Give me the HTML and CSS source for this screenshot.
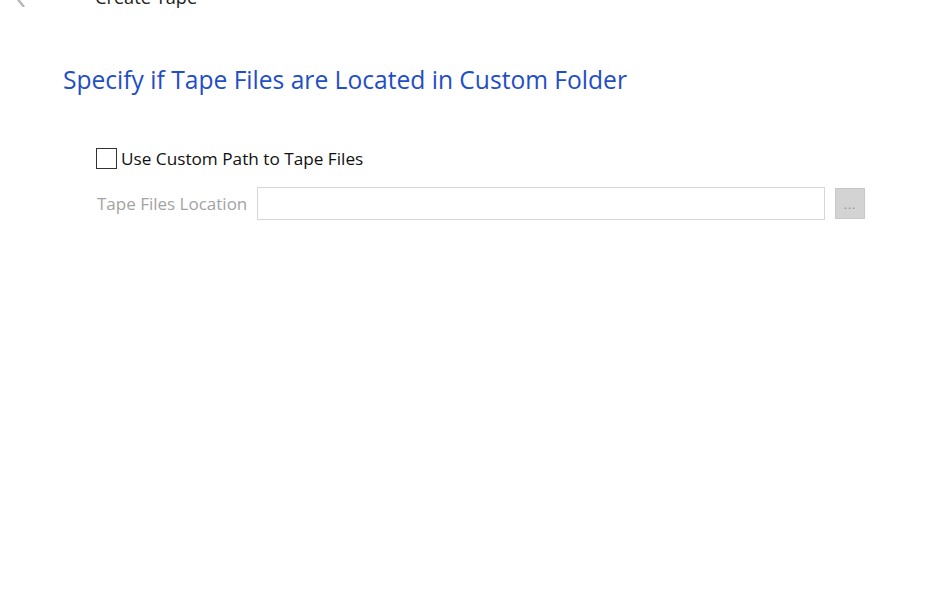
FILE: index.html
```html
<!DOCTYPE html>
<html>
<head>
<meta charset="utf-8">
<link rel="stylesheet" href="styles.css">
</head>
<body>
<div class="page">
  <header class="topbar">
    <span class="back"><svg width="14" height="20" viewBox="0 0 14 20"><path d="M11 0 L3 10 L11 20" fill="none" stroke="#b8b8b8" stroke-width="2.5"/></svg></span>
    <span class="wtitle">Create Tape</span>
  </header>
  <h1 class="heading">Specify if Tape Files are Located in Custom Folder</h1>
  <div class="form">
    <label class="check"><span class="box"></span><span class="check-text">Use Custom Path to Tape Files</span></label>
    <div class="row">
      <span class="lbl">Tape Files Location</span>
      <span class="input"></span>
      <span class="browse">...</span>
    </div>
  </div>
</div>
</body>
</html>
```
FILE: styles.css
```css
html, body { margin: 0; padding: 0; background: #fff; }
body { font-family: "Open Sans", "Noto Sans", sans-serif; width: 940px; height: 615px; overflow: hidden; }
.page { display: flex; flex-direction: column; }
.topbar { display: flex; align-items: center; height: 20px; margin-top: -13px; }
.back { width: 14px; margin-left: 13px; display: flex; }
.wtitle { margin-left: 68px; font-size: 18.2px; color: #222; line-height: 20px; }
.heading { margin: 57px 0 0 63px; font-size: 24.6px; font-weight: 400; color: #1f4ec6; line-height: 32px; }
.form { margin: 51px 0 0 96px; display: flex; flex-direction: column; }
.check { display: flex; align-items: center; height: 22px; }
.box { border: 1.5px solid #333; box-sizing: border-box; width: 21px; height: 21px; }
.check-text { margin-left: 4px; font-size: 17.2px; color: #111; }
.row { display: flex; align-items: center; margin-top: 18px; }
.lbl { font-size: 17px; color: #a3a3a3; width: 160px; margin-left: 1px; }
.input { width: 568px; height: 33px; border: 1px solid #d6d6d6; box-sizing: border-box; }
.browse { margin-left: 10px; width: 30px; height: 31px; background: #d3d3d3; border: 1px solid #c8c8c8; box-sizing: border-box; color: #8a8aa8; font-size: 12px; display: flex; align-items: flex-end; justify-content: center; padding-bottom: 5px; letter-spacing: 1px; }
```
